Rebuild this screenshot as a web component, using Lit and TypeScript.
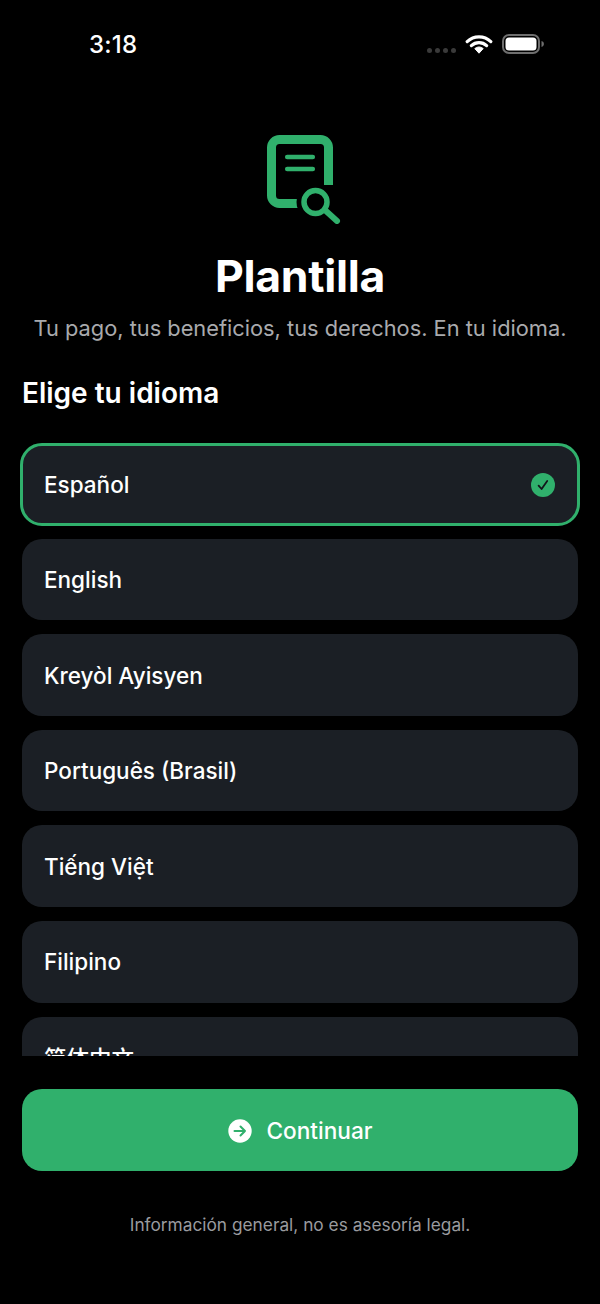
import { LitElement, html, css } from "lit";
import { customElement, state } from "lit/decorators.js";

const LANGUAGES = [
  "Español",
  "English",
  "Kreyòl Ayisyen",
  "Português (Brasil)",
  "Tiếng Việt",
  "Filipino",
  "简体中文",
];

@customElement("app-root")
export class AppRoot extends LitElement {
  static override styles = css`
    :host {
      display: block;
      width: 600px;
      height: 1304px;
      background: #000;
      color: #fff;
      font-family: Inter, "Noto Sans CJK SC", sans-serif;
      overflow: hidden;
    }
    .screen {
      display: flex;
      flex-direction: column;
      height: 1304px;
    }
    .status {
      height: 88px;
      flex: none;
      display: flex;
      align-items: center;
      padding: 0 55px 0 89px;
      box-sizing: border-box;
    }
    .time {
      font-size: 24px;
      font-weight: 500;
      line-height: 29px;
      letter-spacing: 0.2px;
    }
    .status-right {
      margin-left: auto;
      display: flex;
      align-items: center;
    }
    .dots {
      display: flex;
      gap: 3px;
      margin: 12px 9px 0 0;
    }
    .dots i {
      width: 5px;
      height: 5px;
      border-radius: 50%;
      background: #3a3a3a;
    }
    .wifi {
      display: block;
      margin-right: 9px;
    }
    .battery {
      display: block;
    }
    .hero {
      display: flex;
      flex-direction: column;
      align-items: center;
      flex: none;
      padding-top: 47px;
    }
    .logo {
      display: block;
      margin-left: 8px;
    }
    h1 {
      margin: 26px 0 0;
      font-size: 44.5px;
      line-height: 52px;
      font-weight: 700;
      letter-spacing: -0.3px;
    }
    .tagline {
      margin: 12px 0 0;
      font-size: 21.8px;
      line-height: 28px;
      color: #a9aaad;
      white-space: nowrap;
    }
    h2 {
      margin: 33px 22px 0;
      font-size: 28px;
      line-height: 36px;
      font-weight: 600;
      flex: none;
    }
    .list {
      flex: none;
      height: 613px;
      margin: 32px 20px 0;
      overflow: hidden;
      display: flex;
      flex-direction: column;
      gap: 14px;
    }
    .item {
      flex: none;
      box-sizing: border-box;
      height: 81.6px;
      margin: 0 2px;
      padding: 0 22px;
      display: flex;
      align-items: center;
      justify-content: space-between;
      background: #1b1f25;
      border-radius: 20px;
      font-size: 22.5px;
      font-weight: 500;
    }
    .item.selected {
      height: 83px;
      margin: 0 0 -1.3px;
      padding: 0 22px 0 21px;
      border: 3px solid #30b06c;
      border-radius: 22px;
    }
    .check {
      display: block;
    }
    .footer {
      flex: none;
      padding: 33px 22px 0;
      display: flex;
      flex-direction: column;
      align-items: center;
    }
    .continue {
      width: 100%;
      height: 82px;
      border: 0;
      border-radius: 20px;
      background: #30b06c;
      color: #fff;
      display: flex;
      align-items: center;
      justify-content: center;
      gap: 15px;
      font: 500 22.6px Inter, sans-serif;
      padding: 1px 0 0;
    }
    .continue svg {
      display: block;
    }
    .note {
      margin: 43px 0 0;
      font-size: 17.3px;
      line-height: 22px;
      color: #9a9b9f;
    }
  `;

  @state() private selected = "Español";

  private renderItem(name: string) {
    const on = name === this.selected;
    return html`
      <div
        class="item ${on ? "selected" : ""}"
        @click=${() => (this.selected = name)}
      >
        <span>${name}</span>
        ${on
          ? html`<svg class="check" width="24" height="24" viewBox="0 0 24 24">
              <circle cx="12" cy="12" r="12" fill="#30b06c" />
              <path
                d="M7.6 12.6l3 3.4 5.6-8"
                fill="none"
                stroke="#12161a"
                stroke-width="1.8"
                stroke-linecap="round"
                stroke-linejoin="round"
              />
            </svg>`
          : ""}
      </div>
    `;
  }

  override render() {
    return html`
      <div class="screen">
        <div class="status">
          <span class="time">3:18</span>
          <div class="status-right">
            <div class="dots"><i></i><i></i><i></i><i></i></div>
            <svg class="wifi" width="28" height="20" viewBox="0 0 28 20">
              <path
                d="M2.2 7.6a17 17 0 0 1 23.6 0M6.4 11.6a11 11 0 0 1 15.2 0"
                fill="none"
                stroke="#fff"
                stroke-width="3.2"
                stroke-linecap="round"
              />
              <path
                d="M9.8 14.6a6.2 6.2 0 0 1 8.4 0L14 19.2z"
                fill="#fff"
                stroke="#fff"
                stroke-linejoin="round"
              />
            </svg>
            <svg class="battery" width="43" height="20" viewBox="0 0 43 20">
              <rect
                x="1"
                y="1"
                width="36"
                height="18"
                rx="6"
                fill="none"
                stroke="#6e6e6e"
                stroke-width="2"
              />
              <rect x="3.5" y="3.5" width="31" height="13" rx="3.5" fill="#fff" />
              <path d="M39.5 7v6c1.6-.4 2.4-1.6 2.4-3S41.1 7.4 39.5 7z" fill="#6e6e6e" />
            </svg>
          </div>
        </div>

        <div class="hero">
          <svg class="logo" width="74" height="89" viewBox="0 0 74 89">
            <path
              d="M34 68.5H12.5a8 8 0 0 1-8-8V12.5a8 8 0 0 1 8-8h41a8 8 0 0 1 8 8V50"
              fill="none"
              stroke="#30b06c"
              stroke-width="9"
            />
            <path
              d="M20.2 22h25.6M20.2 34h25.6"
              fill="none"
              stroke="#30b06c"
              stroke-width="4.5"
              stroke-linecap="round"
            />
            <circle cx="48.5" cy="67" r="19" fill="#000" />
            <circle cx="48.5" cy="67" r="11.5" fill="none" stroke="#30b06c" stroke-width="5.5" />
            <path
              d="M59 76l11 10"
              fill="none"
              stroke="#30b06c"
              stroke-width="6"
              stroke-linecap="round"
            />
          </svg>
          <h1>Plantilla</h1>
          <p class="tagline">Tu pago, tus beneficios, tus derechos. En tu idioma.</p>
        </div>

        <h2>Elige tu idioma</h2>

        <div class="list">${LANGUAGES.map((l) => this.renderItem(l))}</div>

        <div class="footer">
          <button class="continue">
            <svg width="24" height="24" viewBox="0 0 24 24">
              <circle cx="12" cy="12" r="11.7" fill="#fff" />
              <path
                d="M6.5 12h10.5M12.5 7.5l4.5 4.5-4.5 4.5"
                fill="none"
                stroke="#30b06c"
                stroke-width="2"
                stroke-linecap="round"
                stroke-linejoin="round"
              />
            </svg>
            Continuar
          </button>
          <p class="note">Información general, no es asesoría legal.</p>
        </div>
      </div>
    `;
  }
}
